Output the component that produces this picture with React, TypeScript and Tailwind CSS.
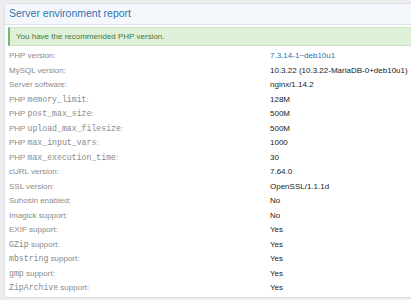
function Code({ children }: { children: React.ReactNode }) {
  return <span className="font-['Liberation_Mono',monospace] text-[8.2px]">{children}</span>
}

const rows: { label: React.ReactNode; value: string; link?: boolean }[] = [
  { label: 'PHP version:', value: '7.3.14-1~deb10u1', link: true },
  { label: 'MySQL version:', value: '10.3.22 (10.3.22-MariaDB-0+deb10u1)' },
  { label: 'Server software:', value: 'nginx/1.14.2' },
  { label: <>PHP <Code>memory_limit</Code>:</>, value: '128M' },
  { label: <>PHP <Code>post_max_size</Code>:</>, value: '500M' },
  { label: <>PHP <Code>upload_max_filesize</Code>:</>, value: '500M' },
  { label: <>PHP <Code>max_input_vars</Code>:</>, value: '1000' },
  { label: <>PHP <Code>max_execution_time</Code>:</>, value: '30' },
  { label: 'cURL version:', value: '7.64.0' },
  { label: 'SSL version:', value: 'OpenSSL/1.1.1d' },
  { label: 'Suhosin enabled:', value: 'No' },
  { label: 'Imagick support:', value: 'No' },
  { label: 'EXIF support:', value: 'Yes' },
  { label: <><Code>GZip</Code> support:</>, value: 'Yes' },
  { label: <><Code>mbstring</Code> support:</>, value: 'Yes' },
  { label: <><Code>gmp</Code> support:</>, value: 'Yes' },
  { label: <><Code>ZipArchive</Code> support:</>, value: 'Yes' },
]

export default function App() {
  return (
    <div className="w-[411px] h-[300px] overflow-hidden bg-[#ededed] pl-[4px] pt-[3px] font-['Liberation_Sans',Arial,sans-serif]">
      <div className="w-[420px] bg-white border border-[#dcdfe3] rounded-[2px]">
        <div className="h-[21px] flex items-center px-[4px] bg-[#f4f8fd] border-b border-[#dde3ea] text-[10.5px] text-[#2f72ad]">
          Server environment report
        </div>
        <div className="px-[3px] pt-[2px]">
          <div className="h-[19px] flex items-center bg-[#dff0d9] border border-[#cde5c6] border-l-[2px] border-l-[#72b66f] pl-[6px] text-[8px] text-[#3f7a3c]">
            You have the recommended PHP version.
          </div>
          <div className="pt-[3px] pb-[1px]">
            {rows.map((r, i) => (
              <div key={i} className="flex h-[14.5px] items-center pl-[1px] text-[8px]">
                <div className="w-[261px] text-[#8a8a8a]">{r.label}</div>
                <div className={r.link ? 'text-[#2f72ad]' : 'text-[#222222]'}>{r.value}</div>
              </div>
            ))}
          </div>
        </div>
      </div>
    </div>
  )
}
